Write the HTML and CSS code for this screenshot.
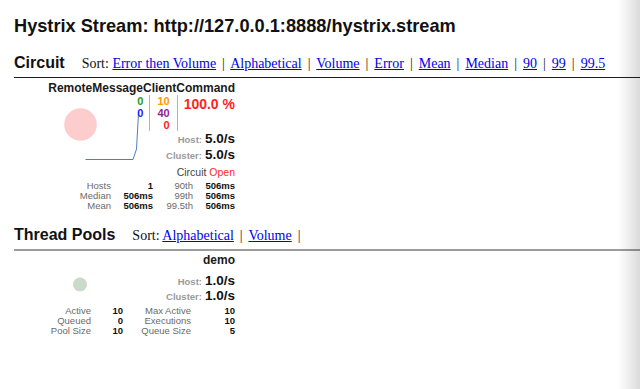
FILE: index.html
```html
<!DOCTYPE html>
<html>
<head>
<meta charset="utf-8">
<title>Hystrix Monitor</title>
<link rel="stylesheet" href="styles.css">
</head>
<body>
<div class="page">
  <h1 class="stream-title">Hystrix Stream: http://127.0.0.1:8888/hystrix.stream</h1>

  <section class="section">
    <div class="menubar">
      <div class="menubar-title">Circuit</div>
      <div class="menu-actions">Sort: <a href="#">Error then Volume</a> <span class="sep">|</span> <a href="#">Alphabetical</a> <span class="sep">|</span> <a href="#">Volume</a> <span class="sep">|</span> <a href="#">Error</a> <span class="sep">|</span> <a href="#">Mean</a> <span class="sep">|</span> <a href="#">Median</a> <span class="sep">|</span> <a href="#">90</a> <span class="sep">|</span> <a href="#">99</a> <span class="sep">|</span> <a href="#">99.5</a></div>
    </div>
    <div class="monitors monitors-command">
      <div class="monitor">
        <svg class="chart" width="221" height="130" viewBox="0 0 221 130">
          <circle cx="66.5" cy="43.5" r="16.3" fill="#fdcdcd"/>
          <path d="M71.5 78.5 H119 L122.5 68 L124.5 32" fill="none" stroke="#4d7fbf" stroke-width="1"/>
        </svg>
        <div class="monitor-data">
          <div class="name">RemoteMessageClientCommand</div>
          <div class="counters">
            <div class="counter-col counter-col-a">
              <span class="success">0</span>
              <span class="short-circuited">0</span>
            </div>
            <div class="counter-col counter-col-b">
              <span class="timeout">10</span>
              <span class="rejected">40</span>
              <span class="failure">0</span>
            </div>
            <div class="error-pct">100.0 %</div>
          </div>
          <div class="rate"><span class="rate-label">Host:</span><span class="rate-value">5.0/s</span></div>
          <div class="rate"><span class="rate-label">Cluster:</span><span class="rate-value">5.0/s</span></div>
          <div class="circuit-status">Circuit <span class="open">Open</span></div>
          <div class="stats stats-command">
            <span class="stat-label">Hosts</span><span class="stat-value">1</span><span class="stat-label">90th</span><span class="stat-value">506ms</span>
            <span class="stat-label">Median</span><span class="stat-value">506ms</span><span class="stat-label">99th</span><span class="stat-value">506ms</span>
            <span class="stat-label">Mean</span><span class="stat-value">506ms</span><span class="stat-label">99.5th</span><span class="stat-value">506ms</span>
          </div>
        </div>
      </div>
    </div>
  </section>

  <section class="section">
    <div class="menubar menubar-pools">
      <div class="menubar-title">Thread Pools</div>
      <div class="menu-actions">Sort: <a href="#">Alphabetical</a> <span class="sep">|</span> <a href="#">Volume</a> <span class="sep">|</span></div>
    </div>
    <div class="monitors monitors-pools">
      <div class="monitor">
        <svg class="chart" width="221" height="60" viewBox="0 0 221 60">
          <circle cx="66" cy="31.5" r="7" fill="#cadbca"/>
        </svg>
        <div class="monitor-data">
          <div class="name">demo</div>
          <div class="rates-pool">
            <div class="rate rate-pool"><span class="rate-label">Host:</span><span class="rate-value">1.0/s</span></div>
            <div class="rate rate-pool"><span class="rate-label">Cluster:</span><span class="rate-value">1.0/s</span></div>
          </div>
          <div class="stats stats-pool">
            <span class="stat-label">Active</span><span class="stat-value">10</span><span class="stat-label">Max Active</span><span class="stat-value">10</span>
            <span class="stat-label">Queued</span><span class="stat-value">0</span><span class="stat-label">Executions</span><span class="stat-value">10</span>
            <span class="stat-label">Pool Size</span><span class="stat-value">10</span><span class="stat-label">Queue Size</span><span class="stat-value">5</span>
          </div>
        </div>
      </div>
    </div>
  </section>
</div>
<div class="edge-shade"></div>
</body>
</html>
```

FILE: styles.css
```css
* {
  box-sizing: border-box;
}

html,
body {
  margin: 0;
  padding: 0;
  background: #ffffff;
}

body {
  font-family: "Liberation Sans", Arial, Helvetica, sans-serif;
  color: #000000;
}

.page {
  padding: 15px 0 0 14px;
}

.stream-title {
  margin: 0;
  font-size: 18.2px;
  line-height: 22px;
  font-weight: bold;
  color: #111111;
}

.section {
  margin-top: 16px;
}

.section + .section {
  margin-top: 14px;
}

.menubar {
  display: flex;
  align-items: baseline;
  gap: 17px;
  padding-bottom: 3px;
  border-bottom: 1px solid #1e1e1e;
}

.menubar-pools {
  border-bottom: 2px solid #9c9c9c;
}

.menubar-title {
  font-size: 16px;
  line-height: 20px;
  font-weight: bold;
  color: #111111;
}

.menu-actions {
  font-family: "Liberation Serif", "Times New Roman", serif;
  font-size: 14px;
  line-height: 20px;
  color: #111111;
  white-space: nowrap;
}

.menu-actions a {
  color: #0000ee;
  text-decoration: underline;
}

.sep {
  margin: 0 2.5px;
  color: #222222;
}

.monitors-command {
  padding-top: 3px;
}

.monitors-pools {
  padding-top: 2px;
}

.monitor {
  display: grid;
  width: 221px;
}

.monitor > .chart,
.monitor > .monitor-data {
  grid-area: 1 / 1;
}

.chart {
  align-self: start;
  overflow: visible;
}

.monitor-data {
  position: relative;
  display: flex;
  flex-direction: column;
  align-items: stretch;
  text-align: right;
}

.name {
  font-size: 12px;
  line-height: 14px;
  font-weight: bold;
  color: #1a1a1a;
  white-space: nowrap;
}

.counters {
  display: flex;
  justify-content: flex-end;
  align-items: stretch;
  font-size: 11px;
  line-height: 12px;
  font-weight: bold;
}

.counter-col {
  display: flex;
  flex-direction: column;
  align-items: flex-end;
  height: 36px;
}

.counter-col-a {
  padding-right: 6px;
  border-right: 1px solid #b4b4b4;
}

.counter-col-b {
  padding: 0 7px;
  border-right: 1px solid #b4b4b4;
}

.success {
  color: #1f9a1f;
}

.short-circuited {
  color: #1a1aff;
}

.timeout {
  color: #ff9900;
}

.rejected {
  color: #8e1f93;
}

.failure {
  color: #ff1a1a;
}

.error-pct {
  padding-left: 6px;
  font-size: 14px;
  line-height: 18px;
  font-weight: bold;
  color: #ff1f1f;
  white-space: nowrap;
}

.rate {
  display: flex;
  justify-content: flex-end;
  align-items: baseline;
  gap: 3px;
  line-height: 16px;
}

.rate-pool {
  line-height: 15px;
}

.rates-pool {
  margin-top: 6px;
}

.rate-label {
  font-size: 9.5px;
  line-height: 10px;
  font-weight: bold;
  color: #9a9a9a;
}

.rate-value {
  font-size: 13.5px;
  font-weight: bold;
  color: #111111;
}

.circuit-status {
  font-size: 10.5px;
  line-height: 18px;
  color: #444444;
}

.open {
  color: #ff2a2a;
}

.stats {
  display: grid;
  justify-content: end;
  font-size: 9.5px;
  line-height: 10px;
  text-align: right;
  white-space: nowrap;
}

.stats-command {
  grid-template-columns: 51px 42px 40px 42px;
}

.stats-pool {
  margin-top: 3px;
  grid-template-columns: 50px 32px 68px 44px;
}

.stat-label {
  color: #6a6a6a;
}

.stat-value {
  font-weight: bold;
  color: #111111;
}

.edge-shade {
  position: fixed;
  top: 0;
  right: 0;
  bottom: 0;
  width: 22px;
  background: linear-gradient(to right, rgba(0, 0, 0, 0), rgba(0, 0, 0, 0.14));
  pointer-events: none;
}
```
